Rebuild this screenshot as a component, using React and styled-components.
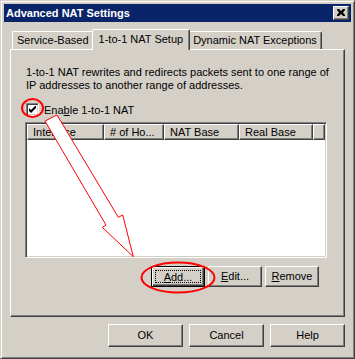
import styled, { createGlobalStyle } from "styled-components";

const GlobalStyle = createGlobalStyle`
  html, body {
    margin: 0;
    padding: 0;
    background: #ffffff;
  }
  body {
    font-family: "Liberation Sans", Arial, sans-serif;
    font-size: 11px;
    color: #000;
  }
`;

const columns = [
  { label: "Interface", width: 77 },
  { label: "# of Ho...", width: 60 },
  { label: "NAT Base", width: 75 },
  { label: "Real Base", width: 74 },
];

export default function App() {
  return (
    <>
      <GlobalStyle />
      <Window>
        <TitleBar>
          <Title>Advanced NAT Settings</Title>
          <CloseButton>
            <svg width="8" height="7" viewBox="0 0 8 7">
              <path d="M0 0h2l2 2 2-2h2v1L6 3.5 8 6v1H6L4 5 2 7H0V6l2-2.5L0 1z" fill="#000" />
            </svg>
          </CloseButton>
        </TitleBar>
        <Body>
          <Tabs>
            <Tab>Service-Based</Tab>
            <Tab $active>1-to-1 NAT Setup</Tab>
            <Tab>Dynamic NAT Exceptions</Tab>
          </Tabs>
          <Panel>
            <Description>
              1-to-1 NAT rewrites and redirects packets sent to one range of
              <br />
              IP addresses to another range of addresses.
            </Description>
            <CheckRow>
              <CheckBox>
                <svg width="7" height="7" viewBox="0 0 7 7">
                  <path d="M0 2v3l2 2 5-5V-1L2 4z" fill="#000" />
                </svg>
              </CheckBox>
              <span>
                Ena<u>b</u>le 1-to-1 NAT
              </span>
            </CheckRow>
            <ListView>
              <HeaderRow>
                {columns.map((c) => (
                  <HeaderCell key={c.label} style={{ width: c.width }}>
                    {c.label}
                  </HeaderCell>
                ))}
                <HeaderFiller />
              </HeaderRow>
            </ListView>
            <ListButtons>
              <Button $small $default>
                <Focus>
                  <u>A</u>dd...
                </Focus>
              </Button>
              <Button $small>
                <u>E</u>dit...
              </Button>
              <Button $small>
                <u>R</u>emove
              </Button>
            </ListButtons>
          </Panel>
          <DialogButtons>
            <Button>OK</Button>
            <Button>Cancel</Button>
            <Button>Help</Button>
          </DialogButtons>
        </Body>
        <Annotations width="355" height="359" viewBox="0 0 355 359">
          <ellipse cx="32.5" cy="108" rx="10.5" ry="9" fill="none" stroke="#ff0000" strokeWidth="2" />
          <polygon
            points="45,121 57,115 118.3,217.3 122.7,215 133.3,256.7 102.3,227.3 106,225"
            fill="#ffffff"
            stroke="#ff0000"
            strokeWidth="1"
          />
          <ellipse cx="178" cy="277.5" rx="36.5" ry="15" fill="none" stroke="#ff0000" strokeWidth="2" />
        </Annotations>
      </Window>
    </>
  );
}

const Window = styled.div`
  position: relative;
  width: 355px;
  height: 359px;
  box-sizing: border-box;
  background: #d4d0c8;
  border: 1px solid;
  border-color: #d4d0c8 #404040 #404040 #d4d0c8;
  box-shadow: inset 1px 1px #ffffff, inset -1px -1px #808080;
  padding: 3px;
  display: flex;
  flex-direction: column;
`;

const TitleBar = styled.div`
  height: 18px;
  flex: none;
  background: #0a246a;
  display: flex;
  align-items: center;
  justify-content: space-between;
  padding: 0 2px 0 2px;
`;

const Title = styled.div`
  color: #ffffff;
  font-weight: bold;
  font-size: 11px;
`;

const CloseButton = styled.div`
  width: 16px;
  height: 14px;
  box-sizing: border-box;
  background: #d4d0c8;
  border: 1px solid;
  border-color: #ffffff #404040 #404040 #ffffff;
  box-shadow: inset -1px -1px #808080;
  display: flex;
  align-items: center;
  justify-content: center;
  padding: 0 1px 1px 0;
`;

const Body = styled.div`
  flex: 1;
  display: flex;
  flex-direction: column;
  padding: 8px 6px 0 6px;
`;

const Tabs = styled.div`
  height: 20px;
  display: flex;
  align-items: flex-end;
  padding-left: 2px;
  position: relative;
  z-index: 1;
  margin-bottom: -1px;
`;

const Tab = styled.div`
  box-sizing: border-box;
  height: ${(p) => (p.$active ? "21px" : "18px")};
  margin: ${(p) => (p.$active ? "0 -2px" : "0 0 1px 0")};
  padding: ${(p) => (p.$active ? "3px 6px 0 6px" : "2px 4px 0 4px")};
  background: #d4d0c8;
  border-top: 1px solid #ffffff;
  border-left: 1px solid #ffffff;
  border-right: 1px solid #404040;
  border-top-left-radius: 2px;
  border-top-right-radius: 2px;
  box-shadow: inset -1px 0 #808080;
  white-space: nowrap;
  position: relative;
  z-index: ${(p) => (p.$active ? 2 : 1)};
`;

const Panel = styled.div`
  height: 268px;
  box-sizing: border-box;
  border: 1px solid;
  border-color: #ffffff #404040 #404040 #ffffff;
  box-shadow: inset -1px -1px #808080;
  padding: 16px 0 0 15px;
  display: flex;
  flex-direction: column;
`;

const Description = styled.p`
  margin: 0;
  line-height: 13px;
`;

const CheckRow = styled.div`
  margin-top: 11px;
  height: 13px;
  display: flex;
  align-items: center;
  gap: 5px;
`;

const CheckBox = styled.div`
  width: 13px;
  height: 13px;
  box-sizing: border-box;
  background: #ffffff;
  border: 1px solid;
  border-color: #808080 #ffffff #ffffff #808080;
  box-shadow: inset 1px 1px #404040, inset -1px -1px #d4d0c8;
  display: flex;
  align-items: center;
  justify-content: center;
`;

const ListView = styled.div`
  margin: 6px 0 0 -1px;
  width: 302px;
  height: 136px;
  box-sizing: border-box;
  background: #ffffff;
  border: 1px solid;
  border-color: #808080 #ffffff #ffffff #808080;
  box-shadow: inset 1px 1px #404040, inset -1px -1px #d4d0c8;
  padding: 1px;
`;

const HeaderRow = styled.div`
  display: flex;
  height: 16px;
`;

const HeaderCell = styled.div`
  box-sizing: border-box;
  height: 16px;
  background: #d4d0c8;
  border-top: 1px solid #ffffff;
  border-left: 1px solid #ffffff;
  border-right: 1px solid #404040;
  border-bottom: 1px solid #404040;
  box-shadow: inset -1px -1px #808080;
  padding-left: 5px;
  line-height: 14px;
  white-space: nowrap;
  overflow: hidden;
`;

const HeaderFiller = styled(HeaderCell)`
  flex: 1;
`;

const ListButtons = styled.div`
  margin-top: 8px;
  display: flex;
  justify-content: flex-end;
  gap: 3px;
  padding-right: 25px;
`;

const Button = styled.div`
  width: ${(p) => (p.$small ? "54px" : "75px")};
  height: ${(p) => (p.$small ? "21px" : "23px")};
  box-sizing: border-box;
  background: #d4d0c8;
  border: 1px solid;
  border-color: ${(p) =>
    p.$default ? "#000000" : "#ffffff #404040 #404040 #ffffff"};
  box-shadow: ${(p) =>
    p.$default
      ? "inset 1px 1px #ffffff, inset -1px -1px #404040, inset -2px -2px #808080"
      : "inset -1px -1px #808080"};
  display: flex;
  align-items: center;
  justify-content: center;
  padding: ${(p) => (p.$default ? "3px" : "0 0 1px 0")};
`;

const Focus = styled.span`
  flex: 1;
  align-self: stretch;
  display: flex;
  align-items: center;
  justify-content: center;
  border: 1px dotted #000;
`;

const DialogButtons = styled.div`
  margin-top: 7px;
  display: flex;
  justify-content: flex-end;
  gap: 6px;
`;

const Annotations = styled.svg`
  position: absolute;
  top: -1px;
  left: -1px;
  pointer-events: none;
  z-index: 5;
`;
